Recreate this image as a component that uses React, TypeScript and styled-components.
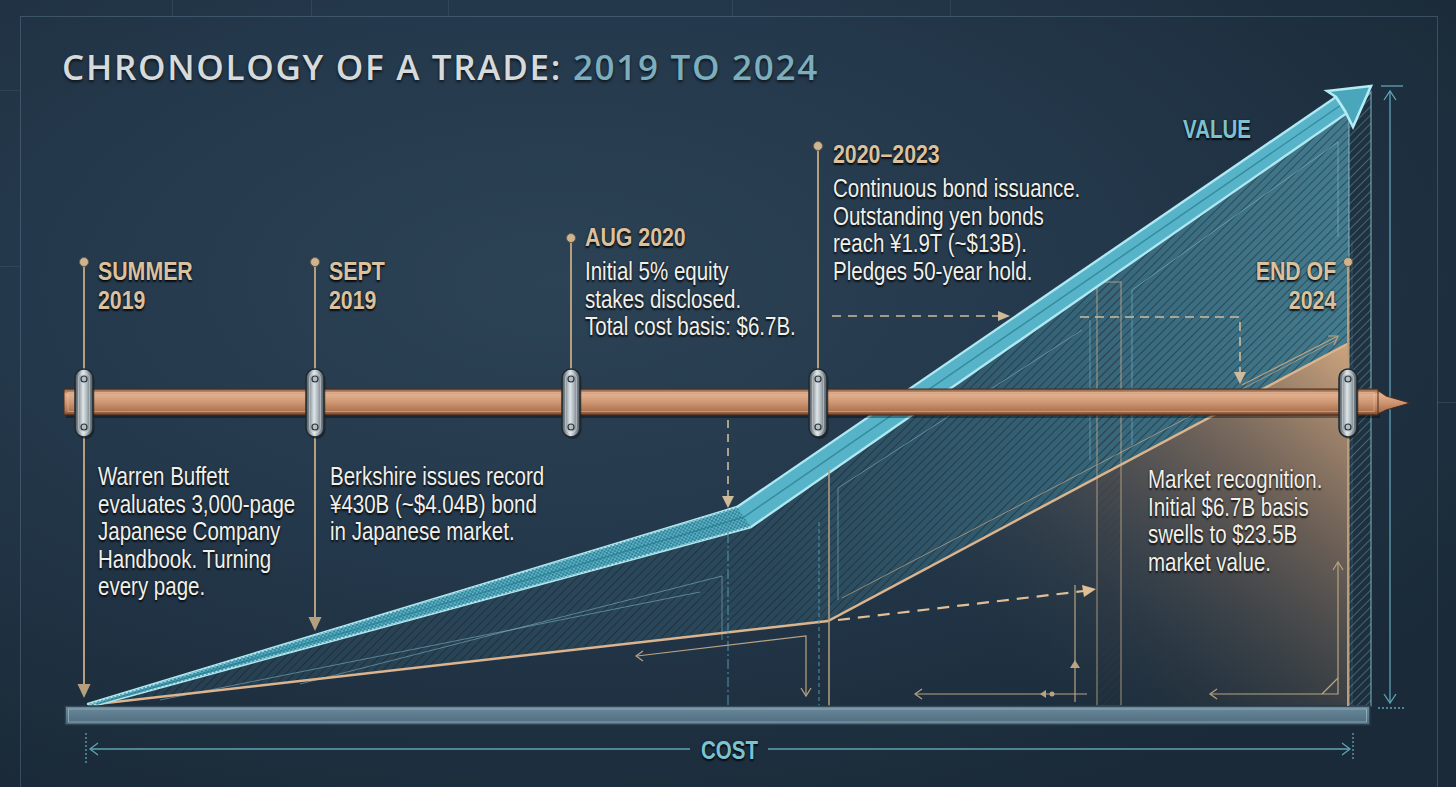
import React from "react";
import styled, { createGlobalStyle } from "styled-components";

const OX = 21;
const OY = 100;
const CHART_W = 1416;
const CHART_H = 687;

const labelFont = `"Liberation Sans", Arial, sans-serif`;

const GlobalStyle = createGlobalStyle`
  html, body {
    margin: 0;
    padding: 0;
  }
  body {
    background: #1c2d3b;
    overflow: hidden;
  }
`;

const Page = styled.div`
  width: 1456px;
  height: 787px;
  overflow: hidden;
  box-sizing: border-box;
  padding: 16px 18px 0 20px;
  background:
    linear-gradient(rgba(120, 155, 178, 0.2), rgba(120, 155, 178, 0.2)) 1437px 402px / 19px 1px no-repeat,
    linear-gradient(rgba(120, 155, 178, 0.14), rgba(120, 155, 178, 0.14)) 0 266px / 20px 1px no-repeat,
    linear-gradient(rgba(120, 155, 178, 0.12), rgba(120, 155, 178, 0.12)) 0 90px / 20px 1px no-repeat,
    linear-gradient(rgba(120, 155, 178, 0.14), rgba(120, 155, 178, 0.14)) 172px 0 / 1px 16px no-repeat,
    linear-gradient(rgba(120, 155, 178, 0.14), rgba(120, 155, 178, 0.14)) 311px 0 / 1px 16px no-repeat,
    linear-gradient(rgba(120, 155, 178, 0.14), rgba(120, 155, 178, 0.14)) 448px 0 / 1px 16px no-repeat,
    linear-gradient(rgba(120, 155, 178, 0.14), rgba(120, 155, 178, 0.14)) 732px 0 / 1px 16px no-repeat,
    linear-gradient(rgba(120, 155, 178, 0.14), rgba(120, 155, 178, 0.14)) 950px 0 / 1px 16px no-repeat,
    radial-gradient(ellipse 75% 72% at 38% 36%, #2c4255 0%, #24384b 50%, #1a2a38 100%);
`;

const Frame = styled.div`
  height: 100%;
  box-sizing: border-box;
  border: 1px solid rgba(120, 155, 178, 0.32);
  border-bottom: none;
  display: flex;
  flex-direction: column;
`;

const Title = styled.h1`
  margin: 0;
  height: 83px;
  box-sizing: border-box;
  padding: 30px 0 13px 41px;
  font-family: "Open Sans", "Liberation Sans", sans-serif;
  font-weight: 600;
  font-size: 35px;
  line-height: 40px;
  letter-spacing: 1.7px;
  color: #d6dada;
  text-shadow: 0 2px 3px rgba(0, 0, 0, 0.65);
  white-space: nowrap;
`;

const Accent = styled.span`
  color: #7caebe;
`;

const Chart = styled.div`
  position: relative;
  flex: 1;
`;

const Drawing = styled.svg`
  position: absolute;
  left: 0;
  top: 0;
  width: ${CHART_W}px;
  height: ${CHART_H}px;
  overflow: visible;
`;

/* labels are set in Arial metrics and squeezed to the narrow face of the poster */
const Node = styled.div<{ $x: number; $y: number; $right?: boolean }>`
  position: absolute;
  top: ${(p) => p.$y - OY}px;
  ${(p) =>
    p.$right
      ? `right: ${OX + CHART_W - p.$x}px; text-align: right; transform-origin: right top;`
      : `left: ${p.$x - OX}px; transform-origin: left top;`}
  transform: scaleX(0.82);
  white-space: nowrap;
`;

const Heading = styled.div<{ $tone?: "tan" | "teal" }>`
  font-family: ${labelFont};
  font-weight: 700;
  font-size: ${(p) => (p.$tone === "teal" ? 25 : 26)}px;
  line-height: 29px;
  color: ${(p) => (p.$tone === "teal" ? "#7cc2d3" : "#dbc19d")};
  text-shadow: 0 2px 2px rgba(0, 0, 0, 0.8), 0 0 2px rgba(0, 0, 0, 0.5);
`;

const Body = styled.div<{ $gap?: number }>`
  margin-top: ${(p) => p.$gap ?? 0}px;
  font-family: ${labelFont};
  font-size: 25px;
  line-height: 27.5px;
  color: #f1f0ea;
  text-shadow: 0 2px 2px rgba(0, 0, 0, 0.75), 0 0 2px rgba(0, 0, 0, 0.5);
`;

const CLAMPS = [84, 315, 571, 818, 1348];

const Clamp = ({ x }: { x: number }) => (
  <g>
    <rect x={x - 9} y={369} width={18} height={68} rx={9} fill="rgba(0,0,0,0.35)" transform="translate(1.5 2)" />
    <rect x={x - 9} y={369} width={18} height={68} rx={9} fill="url(#metal)" stroke="#1f2a31" strokeWidth={1.5} />
    <rect x={x - 5.5} y={373} width={11} height={60} rx={5.5} fill="none" stroke="rgba(255,255,255,0.35)" strokeWidth={1} />
    <circle cx={x} cy={379} r={3} fill="#b4bec4" stroke="#2a343b" strokeWidth={1.2} />
    <circle cx={x} cy={427} r={3} fill="#b4bec4" stroke="#2a343b" strokeWidth={1.2} />
  </g>
);

const Marker = ({ x, top, bottom, arrow }: { x: number; top: number; bottom: number; arrow?: boolean }) => (
  <g>
    <line x1={x} y1={top} x2={x} y2={arrow ? bottom - 12 : bottom} stroke="#b59f7f" strokeWidth={2} />
    <circle cx={x} cy={top} r={4.5} fill="#cdb592" stroke="#6b5a45" strokeWidth={1} />
    {arrow && <polygon points={`${x - 6.5},${bottom - 14} ${x + 6.5},${bottom - 14} ${x},${bottom}`} fill="#b59f7f" />}
  </g>
);

const ChartDrawing = () => (
  <Drawing viewBox={`${OX} ${OY} ${CHART_W} ${CHART_H}`}>
    <defs>
      <pattern id="hatch" width="6" height="6" patternUnits="userSpaceOnUse" patternTransform="rotate(45)">
        <line x1="0" y1="0" x2="0" y2="6" stroke="rgba(12,24,34,0.55)" strokeWidth="1.6" />
      </pattern>
      <pattern id="hatchLight" width="6" height="6" patternUnits="userSpaceOnUse" patternTransform="rotate(45)">
        <line x1="0" y1="0" x2="0" y2="6" stroke="rgba(160,200,212,0.55)" strokeWidth="1.2" />
      </pattern>
      <pattern id="hatchTan" width="6" height="6" patternUnits="userSpaceOnUse" patternTransform="rotate(45)">
        <line x1="0" y1="0" x2="0" y2="6" stroke="rgba(60,55,50,0.6)" strokeWidth="1.4" />
      </pattern>
      <pattern id="checker" width="4" height="4" patternUnits="userSpaceOnUse" patternTransform="rotate(-16)">
        <rect width="2" height="2" fill="rgba(30,90,110,0.55)" />
        <rect x="2" y="2" width="2" height="2" fill="rgba(30,90,110,0.55)" />
      </pattern>
      <linearGradient id="copper" x1="0" y1="0" x2="0" y2="1">
        <stop offset="0" stopColor="#8a5a3e" />
        <stop offset="0.2" stopColor="#e2b08e" />
        <stop offset="0.5" stopColor="#d09874" />
        <stop offset="0.85" stopColor="#ad7452" />
        <stop offset="1" stopColor="#70442b" />
      </linearGradient>
      <linearGradient id="metal" x1="0" y1="0" x2="1" y2="0">
        <stop offset="0" stopColor="#48545c" />
        <stop offset="0.45" stopColor="#dfe5e8" />
        <stop offset="0.6" stopColor="#b9c3c8" />
        <stop offset="1" stopColor="#4b575f" />
      </linearGradient>
      <linearGradient id="valFill" gradientUnits="userSpaceOnUse" x1="88" y1="0" x2="1349" y2="0">
        <stop offset="0" stopColor="rgba(46,74,92,0.55)" />
        <stop offset="0.55" stopColor="rgba(48,84,102,0.6)" />
        <stop offset="0.8" stopColor="rgba(66,128,148,0.64)" />
        <stop offset="1" stopColor="rgba(84,155,175,0.7)" />
      </linearGradient>
      <linearGradient id="costFill" gradientUnits="userSpaceOnUse" x1="1349" y1="343" x2="1050" y2="706">
        <stop offset="0" stopColor="rgba(216,172,130,0.95)" />
        <stop offset="0.35" stopColor="rgba(160,128,102,0.6)" />
        <stop offset="1" stopColor="rgba(40,60,75,0)" />
      </linearGradient>
      <linearGradient id="baseBar" x1="0" y1="0" x2="0" y2="1">
        <stop offset="0" stopColor="#6b8a9b" />
        <stop offset="1" stopColor="#4d6b7c" />
      </linearGradient>
    </defs>

    {/* area under cost */}
    <polygon points="88,705 828,621 1349,343 1349,706 88,706" fill="url(#costFill)" />

    {/* area between value and cost */}
    <polygon points="94,705 750,526 1347,113 1349,118 1349,343 828,621 88,705" fill="url(#valFill)" />
    <polygon points="94,705 750,526 1347,113 1349,118 1349,343 828,621 88,705" fill="url(#hatch)" />

    {/* inner blueprint outlines */}
    <g fill="none" stroke="rgba(140,200,215,0.5)" strokeWidth={1}>
      <path d="M1132 445 L1132 290 L1338 142 L1338 237" />
      <path d="M1090 320 L1090 460" />
      <path d="M838 600 L838 488 L1082 330" />
      <path d="M160 700 L700 592" />
      <path d="M300 684 L722 576 L722 640" />
      <path d="M1352 240 L1352 706" />
    </g>
    <line x1="842" y1="598" x2="1336" y2="340" stroke="rgba(220,180,140,0.6)" strokeWidth={1} />

    {/* hatched columns */}
    <rect x="1097" y="282" width="24" height="424" fill="url(#hatchTan)" stroke="rgba(214,184,146,0.6)" strokeWidth={1.2} />
    <polygon points="1349,118 1371,92 1371,706 1349,706" fill="rgba(30,52,66,0.6)" />
    <polygon points="1349,118 1371,92 1371,706 1349,706" fill="url(#hatchLight)" stroke="rgba(143,195,207,0.75)" strokeWidth={1.2} />

    {/* cost line */}
    <polyline points="88,705 828,621 1349,343" fill="none" stroke="#dcb48d" strokeWidth={2.5} />

    {/* value band */}
    <polygon
      points="88,704 737,507 1336,97 1347,113 751,527 92,706"
      fill="#56b3c8"
      stroke="#aee8f2"
      strokeWidth={2.4}
      strokeLinejoin="round"
    />
    <polygon points="88,704 737,507 751,527 92,706" fill="url(#checker)" />
    <polyline points="97,704 744,517 1341,105" fill="none" stroke="rgba(40,125,145,0.75)" strokeWidth={1.4} />
    <polygon
      points="1327,91 1371,86 1353,127 1345,111 1336,97"
      fill="#4aa6bb"
      stroke="#b4ecf5"
      strokeWidth={2.6}
      strokeLinejoin="miter"
    />

    {/* teal construction verticals */}
    <line x1="728" y1="515" x2="728" y2="706" stroke="#4f98ad" strokeWidth={1} strokeDasharray="10 3 2 3" />
    <line x1="819" y1="522" x2="819" y2="706" stroke="#4f98ad" strokeWidth={1} strokeDasharray="4 3" />
    <line x1="829" y1="470" x2="829" y2="706" stroke="#b59f7f" strokeWidth={1.5} />

    {/* tan annotation lines */}
    <g fill="none" stroke="#b9a383" strokeWidth={1.2}>
      <path d="M637 656 L806 636 L806 695" />
      <path d="M643 651 L636 656 L643 661" />
      <path d="M801 688 L806 696 L811 688" />
      <path d="M915 694 L1087 694" />
      <path d="M922 689 L915 694 L922 699" />
      <path d="M1075 585 L1075 702" />
      <path d="M1210 694 L1338 694 L1338 562" />
      <path d="M1217 689 L1210 694 L1217 699" />
      <path d="M1333 570 L1338 562 L1343 570" />
      <path d="M1322 694 L1338 678" />
      <path d="M1242 385 L1338 336" />
      <path d="M1328 336 L1338 336 L1334 345" />
    </g>
    <polygon points="1070,668 1080,668 1075,660" fill="#b9a383" />
    <polygon points="1046,690 1046,698 1040,694" fill="#b9a383" />
    <circle cx="1052" cy="694" r="2.5" fill="#b9a383" />

    {/* dashed arrows */}
    <g fill="none" strokeWidth={1.6}>
      <path d="M728 420 L728 498" stroke="#cdbb9c" strokeDasharray="8 6" />
      <path d="M832 316 L1000 316" stroke="#cdbb9c" strokeDasharray="9 7" />
      <path d="M1080 317 L1240 317 L1240 374" stroke="#cdbb9c" strokeDasharray="9 6" />
      <path d="M838 620 L1084 591" stroke="#e0bf96" strokeWidth={2.2} strokeDasharray="12 8" />
    </g>
    <polygon points="722,496 734,496 728,508" fill="#cdbb9c" />
    <polygon points="998,311 1010,316 998,321" fill="#cdbb9c" />
    <polygon points="1234,372 1246,372 1240,384" fill="#cdbb9c" />
    <polygon points="1082,585 1096,589 1084,597" fill="#e0bf96" />

    {/* base bar */}
    <rect x="65" y="706" width="1305" height="19" fill="url(#baseBar)" stroke="#243643" strokeWidth={1.5} />
    <rect x="68.5" y="709" width="1298" height="13" fill="none" stroke="rgba(175,205,215,0.55)" strokeWidth={1} />

    {/* cost dimension */}
    <g fill="none" stroke="#5fa3b6" strokeWidth={1.3}>
      <path d="M90 749 L690 749" />
      <path d="M768 749 L1350 749" />
      <path d="M98 743 L90 749 L98 755" />
      <path d="M1342 743 L1350 749 L1342 755" />
      <path d="M86 733 L86 764" strokeDasharray="2 2" />
      <path d="M1353 733 L1353 761" strokeDasharray="2 2" />
    </g>

    {/* value dimension */}
    <g fill="none" stroke="#5fa3b6" strokeWidth={1.3}>
      <path d="M1390 92 L1390 702" />
      <path d="M1384 100 L1390 91 L1396 100" />
      <path d="M1384 694 L1390 703 L1396 694" />
      <path d="M1381 86 L1403 86" />
      <path d="M1378 708 L1404 708" strokeDasharray="2 2" />
    </g>

    {/* event markers */}
    <Marker x={84} top={262} bottom={698} arrow />
    <Marker x={315} top={262} bottom={631} arrow />
    <Marker x={571} top={238} bottom={372} />
    <Marker x={818} top={146} bottom={372} />
    <Marker x={1348} top={262} bottom={706} />

    {/* timeline bar */}
    <rect x="66" y="392" width="1314" height="26" fill="rgba(0,0,0,0.35)" />
    <polygon points="1376,389 1386,396 1410,403 1386,410 1376,415" fill="url(#copper)" stroke="#4a2a18" strokeWidth={1} />
    <rect x="64" y="389" width="1314" height="26" fill="url(#copper)" stroke="#4a2a18" strokeWidth={1} />
    <rect x="68" y="392.5" width="1306" height="19" fill="none" stroke="rgba(255,222,195,0.35)" strokeWidth={1} />

    {CLAMPS.map((x) => (
      <Clamp key={x} x={x} />
    ))}
  </Drawing>
);

export default function App() {
  return (
    <>
      <GlobalStyle />
      <Page>
        <Frame>
          <Title>
            CHRONOLOGY OF A TRADE: <Accent>2019 TO 2024</Accent>
          </Title>
          <Chart>
            <ChartDrawing />

            <Node $x={98} $y={257}>
              <Heading>
                SUMMER
                <br />
                2019
              </Heading>
            </Node>
            <Node $x={98} $y={463}>
              <Body>
                Warren Buffett
                <br />
                evaluates 3,000-page
                <br />
                Japanese Company
                <br />
                Handbook. Turning
                <br />
                every page.
              </Body>
            </Node>

            <Node $x={329} $y={257}>
              <Heading>
                SEPT
                <br />
                2019
              </Heading>
            </Node>
            <Node $x={330} $y={463}>
              <Body>
                Berkshire issues record
                <br />
                ¥430B (~$4.04B) bond
                <br />
                in Japanese market.
              </Body>
            </Node>

            <Node $x={585} $y={223}>
              <Heading>AUG 2020</Heading>
              <Body $gap={6}>
                Initial 5% equity
                <br />
                stakes disclosed.
                <br />
                Total cost basis: $6.7B.
              </Body>
            </Node>

            <Node $x={833} $y={140}>
              <Heading>2020–2023</Heading>
              <Body $gap={6}>
                Continuous bond issuance.
                <br />
                Outstanding yen bonds
                <br />
                reach ¥1.9T (~$13B).
                <br />
                Pledges 50-year hold.
              </Body>
            </Node>

            <Node $x={1183} $y={115}>
              <Heading $tone="teal">VALUE</Heading>
            </Node>

            <Node $x={1336} $y={257} $right>
              <Heading>
                END OF
                <br />
                2024
              </Heading>
            </Node>
            <Node $x={1148} $y={466}>
              <Body>
                Market recognition.
                <br />
                Initial $6.7B basis
                <br />
                swells to $23.5B
                <br />
                market value.
              </Body>
            </Node>

            <Node $x={701} $y={736}>
              <Heading $tone="teal">COST</Heading>
            </Node>
          </Chart>
        </Frame>
      </Page>
    </>
  );
}
